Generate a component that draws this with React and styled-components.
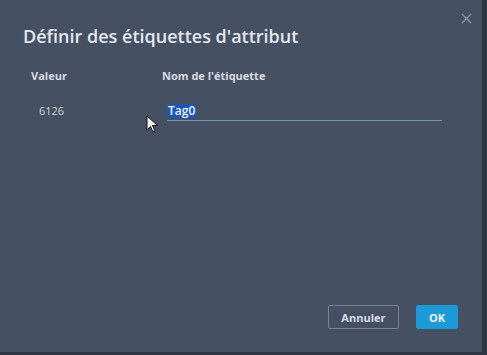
import React from "react";
import styled, { createGlobalStyle } from "styled-components";

const Global = createGlobalStyle`
  html, body { margin: 0; padding: 0; background: #2f3540; }
  body { font-family: "Open Sans", "Noto Sans", sans-serif; }
`;

const Screen = styled.div`
  width: 487px;
  height: 355px;
  background: #2f3540;
  overflow: hidden;
`;

const Dialog = styled.div`
  position: relative;
  width: 482px;
  height: 352px;
  box-sizing: border-box;
  background: #465063;
  display: flex;
  flex-direction: column;
  padding: 24px 24px 23px 23px;
`;

const Close = styled.button`
  position: absolute;
  top: 11px;
  right: 9px;
  width: 14px;
  height: 14px;
  padding: 0;
  border: none;
  background: none;
  cursor: pointer;
  display: flex;
  align-items: center;
  justify-content: center;
`;

const Title = styled.h1`
  margin: 0;
  font-size: 18px;
  line-height: 24px;
  font-weight: 600;
  color: #e4e8ee;
  letter-spacing: 0;
`;

const Table = styled.div`
  display: grid;
  grid-template-columns: 131px 1fr;
  padding: 20px 16px 0 8px;
  row-gap: 17px;
`;

const Head = styled.div`
  font-size: 11px;
  font-weight: 700;
  color: #d7dce3;
  line-height: 16px;
`;

const Cell = styled.div`
  font-size: 11px;
  color: #d0d5dc;
  line-height: 16px;
  padding-left: ${(p) => p.indent || 0}px;
  display: flex;
  align-items: center;
`;

const Field = styled.div`
  position: relative;
  margin-left: 5px;
  border-bottom: 1px solid #6f9ac2;
  height: 19px;
  display: flex;
  align-items: center;
`;

const Selected = styled.span`
  background: #1d56b5;
  color: #eef2f8;
  font-size: 12px;
  font-weight: 600;
  line-height: 14px;
  padding: 0 1px;
`;

const Pointer = styled.svg`
  position: absolute;
  left: -21px;
  top: 14px;
`;

const Spacer = styled.div`
  flex: 1;
`;

const Footer = styled.div`
  display: flex;
  justify-content: flex-end;
  gap: 17px;
`;

const Button = styled.button`
  height: 24px;
  box-sizing: border-box;
  padding: 0 ${(p) => (p.primary ? 12 : 12)}px;
  min-width: ${(p) => (p.primary ? 41 : 71)}px;
  font-family: "Open Sans", "Noto Sans", sans-serif;
  font-size: 11px;
  font-weight: 700;
  border-radius: 2px;
  cursor: pointer;
  color: ${(p) => (p.primary ? "#eef6fc" : "#d7dce3")};
  background: ${(p) => (p.primary ? "#1c9ad8" : "transparent")};
  border: 1px solid ${(p) => (p.primary ? "#1c9ad8" : "#7a8495")};
`;

export default function App() {
  return (
    <Screen>
      <Global />
      <Dialog>
        <Close aria-label="Fermer">
          <svg width="11" height="11" viewBox="0 0 11 11">
            <path d="M1 1 L10 10 M10 1 L1 10" stroke="#8d96a6" strokeWidth="1.4" />
          </svg>
        </Close>
        <Title>Définir des étiquettes d'attribut</Title>
        <Table>
          <Head>Valeur</Head>
          <Head>Nom de l'étiquette</Head>
          <Cell indent={8}>6126</Cell>
          <Field>
            <Pointer width="13" height="19" viewBox="0 0 13 19">
              <path
                d="M1 1 L1 15 L4.5 11.5 L7 17 L9 16 L6.5 10.5 L11.5 10.5 Z"
                fill="#f4f4f4"
                stroke="#111"
                strokeWidth="1"
                strokeLinejoin="round"
              />
            </Pointer>
            <Selected>Tag0</Selected>
          </Field>
        </Table>
        <Spacer />
        <Footer>
          <Button>Annuler</Button>
          <Button primary>OK</Button>
        </Footer>
      </Dialog>
    </Screen>
  );
}
